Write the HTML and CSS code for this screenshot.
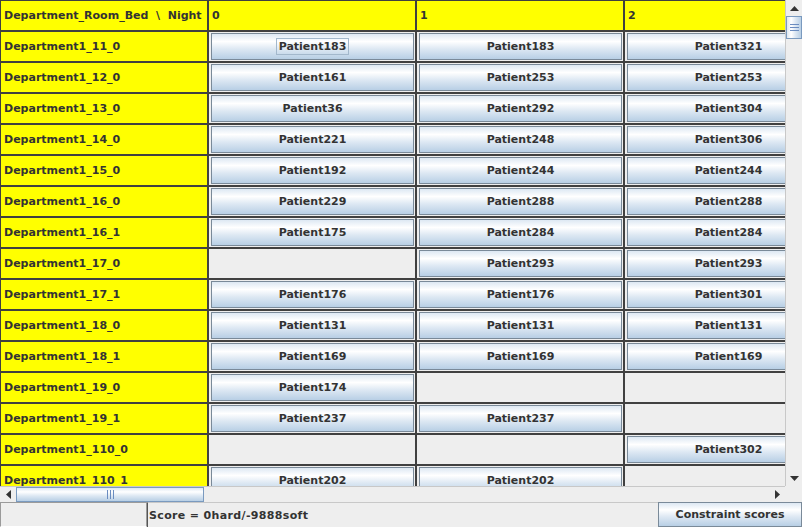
FILE: index.html
```html
<!DOCTYPE html>
<html>
<head>
<meta charset="utf-8">
<link rel="stylesheet" href="styles.css">
</head>
<body>
<div class="app">
  <div class="main">
    <div class="viewport">
      <div class="table">
        <div class="cell head">Department_Room_Bed&nbsp;&nbsp;\&nbsp;&nbsp;Night</div>
        <div class="cell head">0</div>
        <div class="cell head">1</div>
        <div class="cell head">2</div>

        <div class="cell label">Department1_11_0</div>
        <div class="cell slot"><button class="btn"><span class="focus">Patient183</span></button></div>
        <div class="cell slot"><button class="btn">Patient183</button></div>
        <div class="cell slot"><button class="btn">Patient321</button></div>

        <div class="cell label">Department1_12_0</div>
        <div class="cell slot"><button class="btn">Patient161</button></div>
        <div class="cell slot"><button class="btn">Patient253</button></div>
        <div class="cell slot"><button class="btn">Patient253</button></div>

        <div class="cell label">Department1_13_0</div>
        <div class="cell slot"><button class="btn">Patient36</button></div>
        <div class="cell slot"><button class="btn">Patient292</button></div>
        <div class="cell slot"><button class="btn">Patient304</button></div>

        <div class="cell label">Department1_14_0</div>
        <div class="cell slot"><button class="btn">Patient221</button></div>
        <div class="cell slot"><button class="btn">Patient248</button></div>
        <div class="cell slot"><button class="btn">Patient306</button></div>

        <div class="cell label">Department1_15_0</div>
        <div class="cell slot"><button class="btn">Patient192</button></div>
        <div class="cell slot"><button class="btn">Patient244</button></div>
        <div class="cell slot"><button class="btn">Patient244</button></div>

        <div class="cell label">Department1_16_0</div>
        <div class="cell slot"><button class="btn">Patient229</button></div>
        <div class="cell slot"><button class="btn">Patient288</button></div>
        <div class="cell slot"><button class="btn">Patient288</button></div>

        <div class="cell label">Department1_16_1</div>
        <div class="cell slot"><button class="btn">Patient175</button></div>
        <div class="cell slot"><button class="btn">Patient284</button></div>
        <div class="cell slot"><button class="btn">Patient284</button></div>

        <div class="cell label">Department1_17_0</div>
        <div class="cell slot"></div>
        <div class="cell slot"><button class="btn">Patient293</button></div>
        <div class="cell slot"><button class="btn">Patient293</button></div>

        <div class="cell label">Department1_17_1</div>
        <div class="cell slot"><button class="btn">Patient176</button></div>
        <div class="cell slot"><button class="btn">Patient176</button></div>
        <div class="cell slot"><button class="btn">Patient301</button></div>

        <div class="cell label">Department1_18_0</div>
        <div class="cell slot"><button class="btn">Patient131</button></div>
        <div class="cell slot"><button class="btn">Patient131</button></div>
        <div class="cell slot"><button class="btn">Patient131</button></div>

        <div class="cell label">Department1_18_1</div>
        <div class="cell slot"><button class="btn">Patient169</button></div>
        <div class="cell slot"><button class="btn">Patient169</button></div>
        <div class="cell slot"><button class="btn">Patient169</button></div>

        <div class="cell label">Department1_19_0</div>
        <div class="cell slot"><button class="btn">Patient174</button></div>
        <div class="cell slot"></div>
        <div class="cell slot"></div>

        <div class="cell label">Department1_19_1</div>
        <div class="cell slot"><button class="btn">Patient237</button></div>
        <div class="cell slot"><button class="btn">Patient237</button></div>
        <div class="cell slot"></div>

        <div class="cell label">Department1_110_0</div>
        <div class="cell slot"></div>
        <div class="cell slot"></div>
        <div class="cell slot"><button class="btn">Patient302</button></div>

        <div class="cell label">Department1_110_1</div>
        <div class="cell slot"><button class="btn">Patient202</button></div>
        <div class="cell slot"><button class="btn">Patient202</button></div>
        <div class="cell slot"></div>
      </div>
    </div>

    <div class="vscroll">
      <div class="arrow up"><svg width="9" height="5" viewBox="0 0 9 5"><path d="M0 5 L4.5 0 L9 5 Z" fill="#333"/></svg></div>
      <div class="vtrack">
        <div class="vthumb"><span class="hgrip"></span><span class="hgrip"></span><span class="hgrip"></span></div>
      </div>
      <div class="arrow down"><svg width="9" height="5" viewBox="0 0 9 5"><path d="M0 0 L4.5 5 L9 0 Z" fill="#333"/></svg></div>
    </div>

    <div class="hscroll">
      <div class="arrow left"><svg width="5" height="9" viewBox="0 0 5 9"><path d="M5 0 L0 4.5 L5 9 Z" fill="#333"/></svg></div>
      <div class="htrack">
        <div class="hthumb"><span class="vgrip"></span><span class="vgrip"></span><span class="vgrip"></span></div>
      </div>
      <div class="arrow right"><svg width="5" height="9" viewBox="0 0 5 9"><path d="M0 0 L5 4.5 L0 9 Z" fill="#333"/></svg></div>
    </div>
    <div class="corner"></div>
  </div>

  <div class="status">
    <div class="status-left"></div>
    <div class="score">Score = 0hard/-9888soft</div>
    <button class="btn status-btn">Constraint scores</button>
  </div>
</div>
</body>
</html>
```

FILE: styles.css
```css
html, body {
  margin: 0;
  padding: 0;
  background: #eeeeee;
}
body {
  font-family: "DejaVu Sans", sans-serif;
  font-weight: bold;
  font-size: 11px;
  color: #333333;
  overflow: hidden;
}
.app {
  width: 802px;
  height: 527px;
  display: flex;
  flex-direction: column;
}
.main {
  display: grid;
  grid-template-columns: 785px 17px;
  grid-template-rows: 486px 16px;
}
.viewport {
  overflow: hidden;
  background: #eeeeee;
}
.table {
  display: grid;
  grid-template-columns: 206px repeat(3, 206px);
  grid-template-rows: 29px;
  grid-auto-rows: 29px;
  gap: 2px;
  background: #404040;
  border: 1px solid #404040;
  width: max-content;
}
.cell {
  display: flex;
  align-items: center;
  overflow: hidden;
  white-space: nowrap;
}
.head, .label {
  background: #ffff00;
  padding-left: 3px;
}
.slot {
  background: #eeeeee;
  padding: 1px 1px 1px 2px;
  align-items: stretch;
}
.btn {
  flex: 1;
  margin: 0;
  padding: 0;
  border: 1px solid #7a8a99;
  background: linear-gradient(#dde8f3 0%, #ffffff 30%, #dde8f3 60%, #b8cfe5 100%);
  font-family: "DejaVu Sans", sans-serif;
  font-weight: bold;
  font-size: 11px;
  color: #333333;
  text-align: center;
  white-space: nowrap;
}
.focus {
  outline: 1px solid #a3b8cc;
  outline-offset: 1px;
  padding: 0 1px;
}

/* vertical scrollbar */
.vscroll {
  display: flex;
  flex-direction: column;
  background: #eeeeee;
  border-left: 1px solid #c8c8c8;
}
.arrow {
  display: flex;
  align-items: center;
  justify-content: center;
  background: #eeeeee;
  flex: none;
}
.up, .down {
  height: 16px;
}
.vtrack {
  flex: 1;
  position: relative;
}
.vthumb {
  position: absolute;
  left: 0;
  right: 0;
  top: 0;
  height: 23px;
  box-sizing: border-box;
  border: 1px solid #7a9abf;
  background: linear-gradient(90deg, #dde8f3 0%, #ffffff 30%, #dde8f3 60%, #b8cfe5 100%);
  display: flex;
  flex-direction: column;
  align-items: center;
  justify-content: center;
  gap: 2px;
}
.hgrip {
  width: 9px;
  height: 1px;
  background: #6a8cc0;
}

/* horizontal scrollbar */
.hscroll {
  display: flex;
  background: #eeeeee;
  border-top: 1px solid #c8c8c8;
  box-sizing: border-box;
}
.left, .right {
  width: 16px;
}
.htrack {
  flex: 1;
  position: relative;
}
.hthumb {
  position: absolute;
  top: 0;
  bottom: 0;
  left: 0;
  width: 188px;
  box-sizing: border-box;
  border: 1px solid #7a9abf;
  background: linear-gradient(#dde8f3 0%, #ffffff 30%, #dde8f3 60%, #b8cfe5 100%);
  display: flex;
  align-items: center;
  justify-content: center;
  gap: 2px;
}
.vgrip {
  width: 1px;
  height: 9px;
  background: #6a8cc0;
}
.corner {
  background: #eeeeee;
}

/* status bar */
.status {
  flex: 1;
  display: flex;
  align-items: stretch;
}
.status-left {
  width: 147px;
  box-sizing: border-box;
  border: 1px solid #9a9a9a;
  border-bottom-color: #ffffff;
  background: #eeeeee;
}
.score {
  flex: 1;
  display: flex;
  align-items: center;
  padding-left: 1px;
  letter-spacing: 0.35px;
  border-left: 1px solid #555555;
  border-top: 1px solid #c8c8c8;
}
.status-btn {
  flex: none;
  width: 144px;
  font-size: 11px;
}
```
